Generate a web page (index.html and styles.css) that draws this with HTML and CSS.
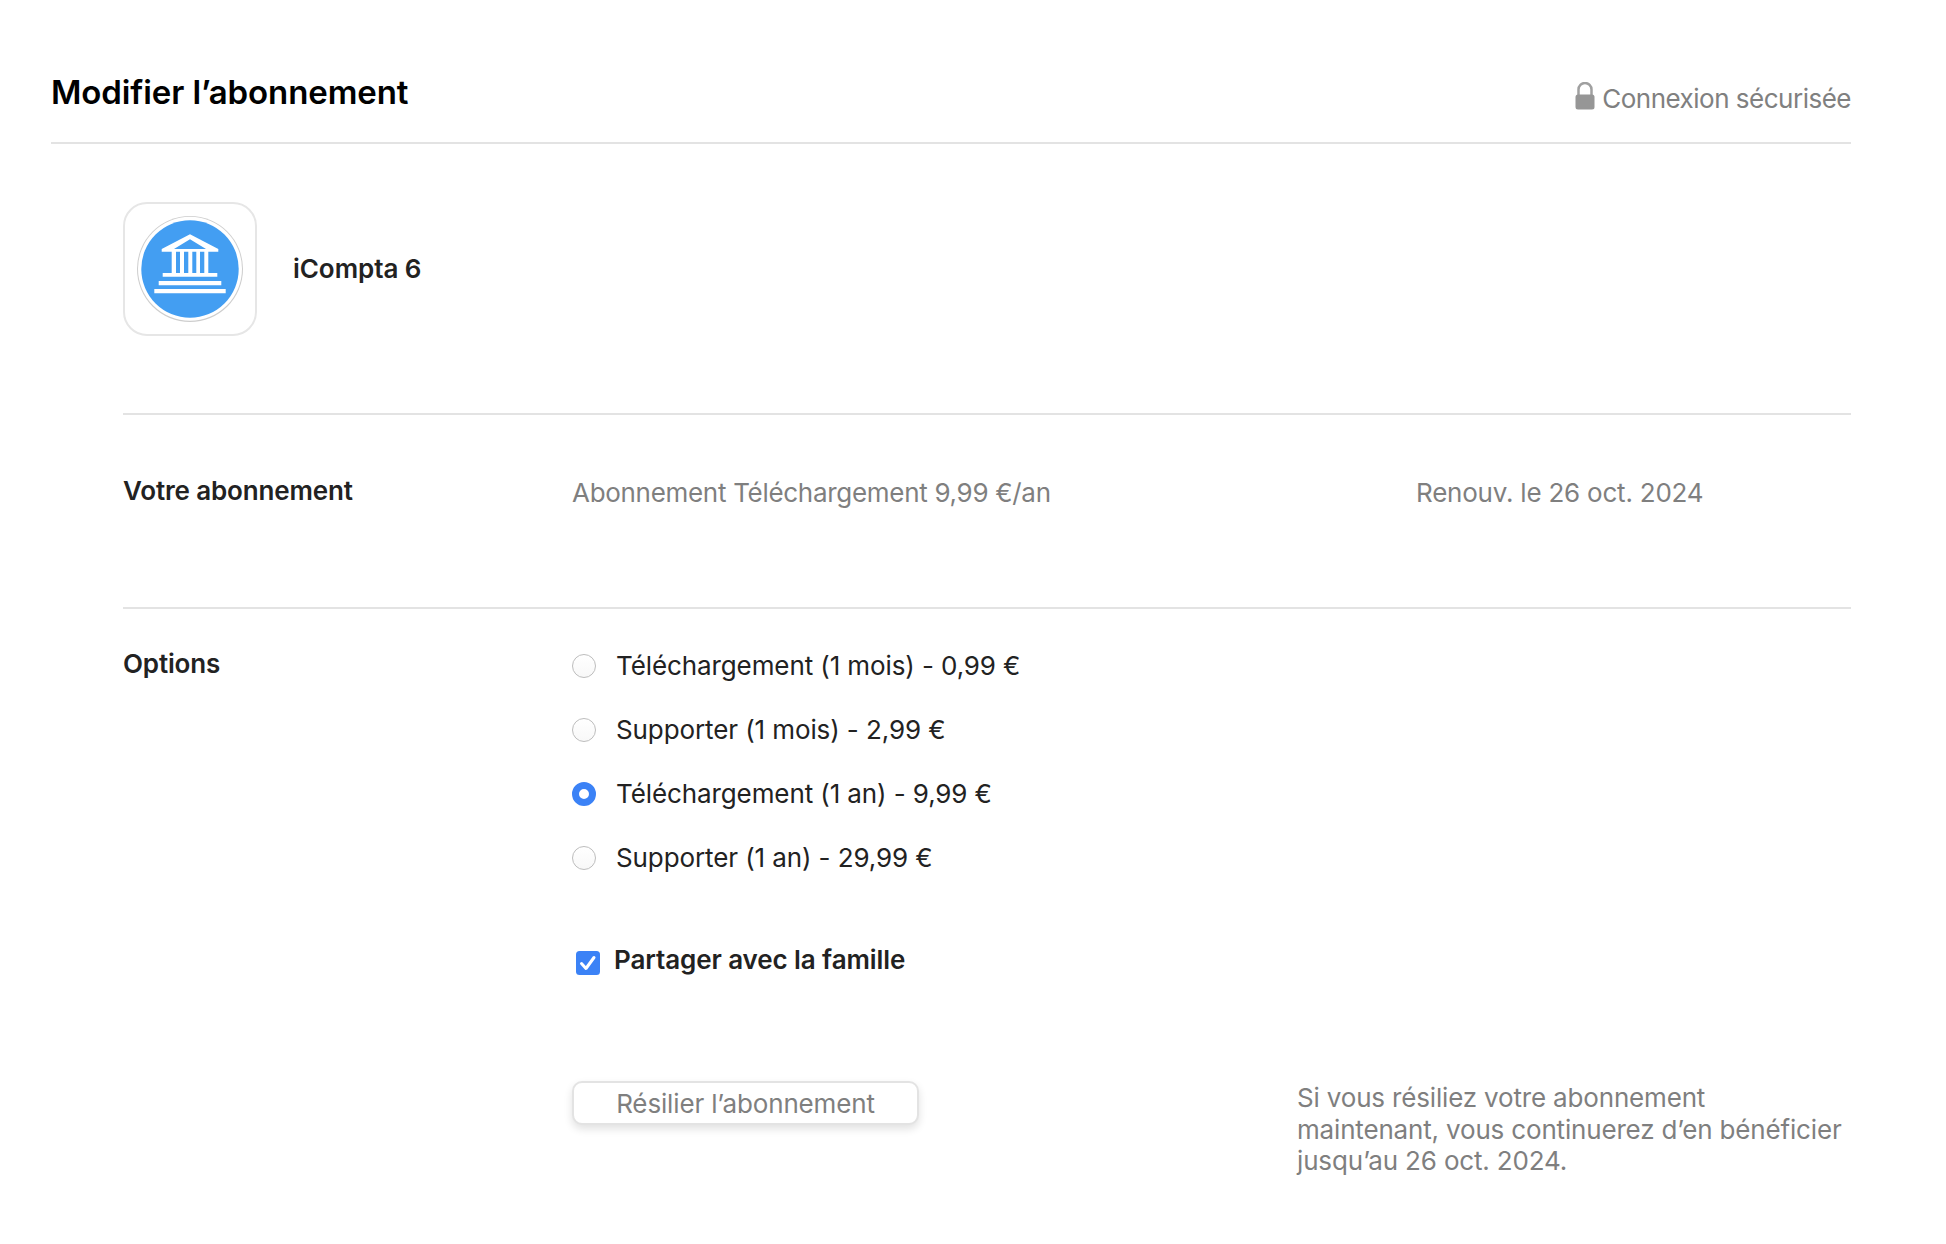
FILE: index.html
```html
<!DOCTYPE html>
<html lang="fr">
<head>
<meta charset="utf-8">
<title>Modifier l’abonnement</title>
<link rel="stylesheet" href="styles.css">
</head>
<body>
<main class="page">
  <header class="top">
    <h1 class="title">Modifier l’abonnement</h1>
    <div class="secure">
      <svg class="lock" viewBox="0 0 20 28" aria-hidden="true"><path d="M3.500 14V7.500a6.500 6.500 0 0 1 13 0V14" fill="none" stroke="#a0a0a0" stroke-width="2.500"/><rect x="0.500" y="12.500" width="19" height="15" rx="2.500" fill="#969696"/></svg>
      <span>Connexion sécurisée</span>
    </div>
  </header>
  <div class="content">
    <section class="app">
      <div class="app-box">
        <svg class="app-icon" viewBox="0 0 106 106" aria-hidden="true">
          <circle cx="53" cy="53" r="53" fill="#cdcdcd"/>
          <circle cx="53" cy="52.800" r="52" fill="#fff"/>
          <circle cx="53" cy="53" r="48.700" fill="#439ef2"/>
          <path d="M53 18.300 L81.300 33 V35.700 H24.700 V33 Z M53 23.300 L37 33 H69 Z" fill="#fff" fill-rule="evenodd"/>
          <path d="M34.700 35h4.300v22h-4.300zM43 35h4v22h-4zM51.300 35h4v22h-4zM59.300 35h3.700v22h-3.700zM67.300 35h4v22h-4zM25.700 57h54.600v3.700H25.700zM21.700 65h62.600v4.300H21.700zM17.300 73h71.400v4.300H17.300z" fill="#fff"/>
        </svg>
      </div>
      <strong class="app-name">iCompta 6</strong>
    </section>

    <section class="row row-plan">
      <h2 class="label">Votre abonnement</h2>
      <p class="muted plan">Abonnement Téléchargement 9,99 €/an</p>
      <p class="muted renew">Renouv. le 26 oct. 2024</p>
    </section>

    <section class="row row-options">
      <h2 class="label label-options">Options</h2>
      <div class="options">
        <div class="option"><span class="radio"></span><span>Téléchargement (1 mois) - 0,99 €</span></div>
        <div class="option"><span class="radio"></span><span>Supporter (1 mois) - 2,99 €</span></div>
        <div class="option"><span class="radio radio-on"></span><span>Téléchargement (1 an) - 9,99 €</span></div>
        <div class="option"><span class="radio"></span><span>Supporter (1 an) - 29,99 €</span></div>
        <div class="family">
          <svg class="check" viewBox="0 0 24 24" aria-hidden="true"><rect width="24" height="24" rx="3.500" fill="#3b82f6"/><path d="M5.500 12.500l4.500 5 8-11" fill="none" stroke="#fff" stroke-width="3" stroke-linecap="round" stroke-linejoin="round"/></svg>
          <span class="family-name">Partager avec la famille</span>
        </div>
        <div class="cancel">
          <button class="btn" type="button">Résilier l’abonnement</button>
          <p class="muted note">Si vous résiliez votre abonnement maintenant, vous continuerez d’en bénéficier jusqu’au 26 oct. 2024.</p>
        </div>
      </div>
    </section>
  </div>
</main>
</body>
</html>
```

FILE: styles.css
```css
* { box-sizing: border-box; }
html, body { margin: 0; padding: 0; background: #fff; }
body {
  width: 1946px;
  height: 1244px;
  overflow: hidden;
  font-family: Inter, "Liberation Sans", sans-serif;
  font-size: 26px;
  color: #222;
}
h1, h2, p { margin: 0; }
.page { padding: 0 95px 0 51px; }
.top {
  height: 144px;
  display: flex;
  justify-content: space-between;
  align-items: flex-start;
  border-bottom: 2px solid #e3e3e3;
}
.title {
  margin-top: 70px;
  font-size: 33px;
  line-height: 44px;
  font-weight: 600;
  color: #000;
  letter-spacing: -0.100px;
}
.secure {
  margin-top: 80px;
  display: flex;
  align-items: flex-start;
  gap: 7px;
  color: #808080;
  line-height: 38px;
  letter-spacing: -0.500px;
}
.lock { width: 20px; height: 28px; margin-top: 2px; }
.content { padding-left: 72px; }
.app {
  height: 271px;
  padding-top: 58px;
  display: flex;
  align-items: flex-start;
  gap: 36px;
  border-bottom: 2px solid #e3e3e3;
}
.app-box {
  width: 134px;
  height: 134px;
  border: 2px solid #e6e6e6;
  border-radius: 24px;
  display: flex;
  align-items: center;
  justify-content: center;
}
.app-icon { width: 106px; height: 106px; }
.app-name { line-height: 134px; font-weight: 600; letter-spacing: -0.050px; }
.row { display: flex; }
.row-plan {
  height: 194px;
  padding-top: 57px;
  border-bottom: 2px solid #e3e3e3;
}
.label {
  width: 449px;
  flex: none;
  font-size: 26px;
  line-height: 38px;
  font-weight: 600;
  letter-spacing: -0.150px;
}
.label-options { margin-top: 12px; }
.muted { color: #7f7f7f; }
.plan { width: 844px; line-height: 38px; padding-top: 2px; letter-spacing: -0.300px; }
.renew { line-height: 38px; padding-top: 2px; letter-spacing: -0.220px; }
.row-options { padding-top: 24px; }
.options { flex: 1; }
.option {
  height: 64px;
  display: flex;
  align-items: center;
  gap: 20px;
  padding-top: 1px;
  letter-spacing: -0.100px;
}
.radio {
  width: 24px;
  height: 24px;
  border-radius: 50%;
  border: 1.500px solid #bdbdbd;
  background: linear-gradient(#fff, #f8f8f8);
}
.radio-on {
  border: 7.500px solid #3b82f6;
  background: #fff;
}
.family {
  margin-top: 53px;
  margin-left: 4px;
  display: flex;
  align-items: flex-start;
  gap: 14px;
  line-height: 36px;
}
.family-name { font-weight: 600; letter-spacing: -0.090px; }
.check { width: 24px; height: 24px; margin-top: 9px; }
.cancel {
  margin-top: 103px;
  display: flex;
  align-items: flex-start;
}
.btn {
  width: 347px;
  height: 44px;
  padding: 2px 0 0;
  flex: none;
  font: inherit;
  line-height: 38px;
  color: #7f7f7f;
  background: #fff;
  border: 2px solid #e3e3e3;
  border-radius: 10px;
  box-shadow: 0 4px 8px rgba(0, 0, 0, 0.120);
  letter-spacing: -0.150px;
}
.note {
  margin-left: 378px;
  width: 550px;
  line-height: 31.500px;
  margin-top: 1px;
  letter-spacing: -0.170px;
}
```
